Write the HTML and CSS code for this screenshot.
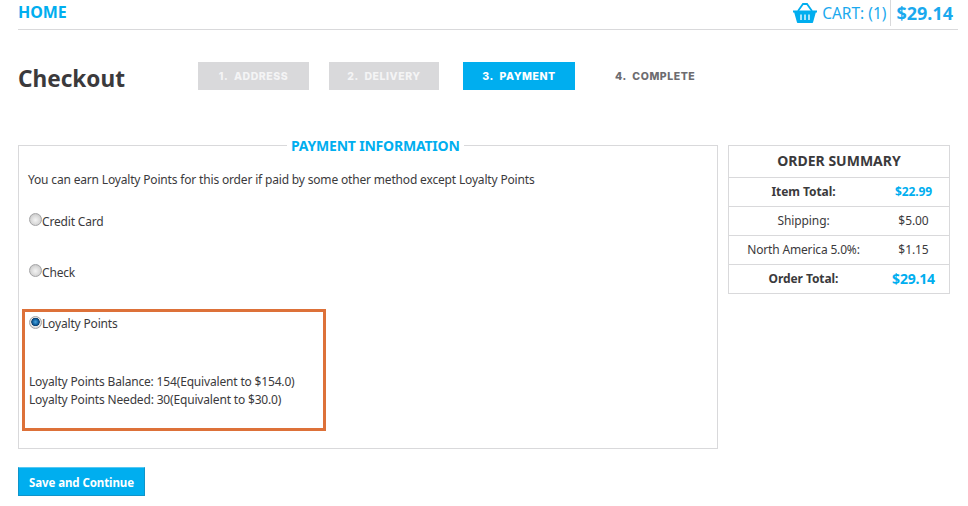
FILE: index.html
```html
<!DOCTYPE html>
<html lang="en">
<head>
<meta charset="utf-8">
<title>Checkout</title>
<link rel="stylesheet" href="styles.css">
</head>
<body>
<div class="page">
  <header class="topbar">
    <a class="home" href="#">HOME</a>
    <div class="cart">
      <svg class="basket" viewBox="0 0 24 20" width="24" height="20" aria-hidden="true">
        <path d="M0 7.5h24v2h-1.200L20 19.500a.7.7 0 0 1-.7.5H4.700a.7.7 0 0 1-.7-.5L1.200 9.500H0z" fill="#00aeef"/>
        <path d="M5 8 10 1h4l5 7" fill="none" stroke="#00aeef" stroke-width="1.800"/>
        <path d="M8 11.500v5.500M12 11.500v5.500M16 11.500v5.500" stroke="#fff" stroke-width="1.300"/>
      </svg>
      <span class="cart-label">CART: (1)</span>
      <span class="cart-total">$29.14</span>
    </div>
  </header>

  <div class="title-row">
    <h1>Checkout</h1>
    <ol class="steps">
      <li class="step done step-a">1.&nbsp; ADDRESS</li>
      <li class="step done step-b">2.&nbsp; DELIVERY</li>
      <li class="step active">3.&nbsp; PAYMENT</li>
      <li class="step todo">4.&nbsp; COMPLETE</li>
    </ol>
  </div>

  <div class="columns">
    <div class="main-col">
      <fieldset class="payment">
        <legend>PAYMENT INFORMATION</legend>
        <p class="note">You can earn Loyalty Points for this order if paid by some other method except Loyalty Points</p>
        <label class="method method-card"><input type="radio" name="pay">Credit Card</label>
        <label class="method method-check"><input type="radio" name="pay">Check</label>
        <div class="highlight">
          <label class="method"><input type="radio" name="pay" checked>Loyalty Points</label>
          <p class="balance">Loyalty Points Balance: 154(Equivalent to $154.0)</p>
          <p class="balance">Loyalty Points Needed: 30(Equivalent to $30.0)</p>
        </div>
      </fieldset>
      <button class="save" type="button">Save and Continue</button>
    </div>

    <aside class="summary">
      <h2>ORDER SUMMARY</h2>
      <div class="row strong"><span>Item Total:</span><span class="blue">$22.99</span></div>
      <div class="row"><span>Shipping:</span><span>$5.00</span></div>
      <div class="row"><span class="tight">North America 5.0%:</span><span>$1.15</span></div>
      <div class="row strong"><span>Order Total:</span><span class="blue big">$29.14</span></div>
    </aside>
  </div>
</div>
</body>
</html>
```

FILE: styles.css
```css
* { box-sizing: border-box; }
html, body { margin: 0; background: #fff; }
body {
  font-family: "Noto Sans", "Open Sans", sans-serif;
  font-size: 12px;
  color: #3b3a3c;
}
.page { width: 958px; padding-left: 18px; }

.topbar {
  height: 30px;
  border-bottom: 1px solid #d9d9db;
  display: flex;
  justify-content: space-between;
  align-items: flex-start;
}
.home {
  font-size: 16px;
  font-weight: 700;
  line-height: 24px;
  letter-spacing: -0.1px;
  color: #00aeef;
  text-decoration: none;
}
.cart { display: flex; align-items: center; height: 26px; color: #1aa9ee; padding-right: 5px; }
.basket { margin-right: 5px; }
.cart-label { font-size: 15.500px; padding-right: 4px; line-height: 26px; }
.cart-total {
  font-size: 18px;
  font-weight: 700;
  line-height: 26px;
  padding-left: 5px;
  border-left: 1px solid #d9d9db;
}

.title-row { display: flex; align-items: flex-start; height: 106px; }
h1 {
  margin: 32px 0 0;
  width: 180px;
  font-size: 22.600px;
  line-height: 34px;
  font-weight: 700;
  color: #3b3a3c;
}
.steps {
  list-style: none;
  margin: 32px 0 0;
  padding: 0;
  display: flex;
}
.step {
  height: 28px;
  padding-top: 1px;
  line-height: 27px;
  font-family: Inter, "Liberation Sans", sans-serif;
  font-size: 10.500px;
  font-weight: 800;
  letter-spacing: 0.550px;
  text-align: center;
}
.done { background: #d9d9db; color: #f4f4f5; }
.step-a { width: 111px; margin-right: 20px; }
.step-b { width: 110px; margin-right: 24px; }
.active { width: 112px; background: #00aeef; color: #fff; margin-right: 40px; }
.todo { color: #6d6c6f; }

.columns { display: flex; align-items: flex-start; gap: 10px; }
.main-col { width: 700px; }

.payment {
  margin: 0;
  padding: 0 0 18px 3px;
  height: 313px;
  border: 1px solid #d9d9db;
  min-width: 0;
  letter-spacing: -0.170px;
}
.payment legend {
  margin: 0 0 0 265px;
  padding: 0 4px;
  font-size: 14px;
  line-height: 19px;
  font-weight: 700;
  letter-spacing: -0.200px;
  color: #00aeef;
}
.note { margin: 16px 0 0 6px; line-height: 18px; }
.method { display: flex; align-items: flex-start; line-height: 18px; }
.method-card, .method-check { margin-left: 7px; }
.method-card { margin-top: 24px; }
.method-check { margin-top: 33px; }
.method input {
  appearance: none;
  width: 13px;
  height: 13px;
  margin: 0;
  border-radius: 50%;
  border: 1px solid #a4a4a6;
  background: radial-gradient(circle at 50% 55%, #f4f4f4 0, #d8d8d8 55%, #b8b8b8 100%);
}
.method input:checked {
  margin-top: 1px;
  background: radial-gradient(circle at 50% 45%, #4aa6e0 0, #0f5f9f 35%, #0b3d6b 48%, #e6e6e6 55%, #c8c8c8 100%);
}
.highlight {
  margin-top: 27px;
  width: 304px;
  height: 122px;
  padding: 3px 0 0 4px;
  border: 3px solid #dd7139;
}
.balance { margin: 0; line-height: 18px; }
.highlight .method { margin-bottom: 40px; }

.save {
  display: block;
  margin-top: 18px;
  width: 127px;
  height: 29px;
  padding: 2px 0 0;
  background: #00aeef;
  border: 1px solid #0f94c9;
  border-top-color: #55c8f2;
  color: #fff;
  font-family: inherit;
  font-size: 11.500px;
  font-weight: 700;
  letter-spacing: -0.100px;
}

.summary { width: 222px; border: 1px solid #d9d9db; margin-top: 9px; }
.summary h2 {
  margin: 0;
  height: 31px;
  line-height: 30px;
  text-align: center;
  font-size: 14px;
  font-weight: 700;
  color: #3b3a3c;
}
.row {
  display: grid;
  grid-template-columns: 149px 1fr;
  height: 29px;
  line-height: 28px;
  border-top: 1px solid #d9d9db;
  text-align: center;
  letter-spacing: -0.080px;
}
.tight { letter-spacing: -0.170px; }
.strong { font-weight: 700; }
.blue { color: #00aeef; }
.big { font-size: 14px; letter-spacing: -0.200px; }
```
